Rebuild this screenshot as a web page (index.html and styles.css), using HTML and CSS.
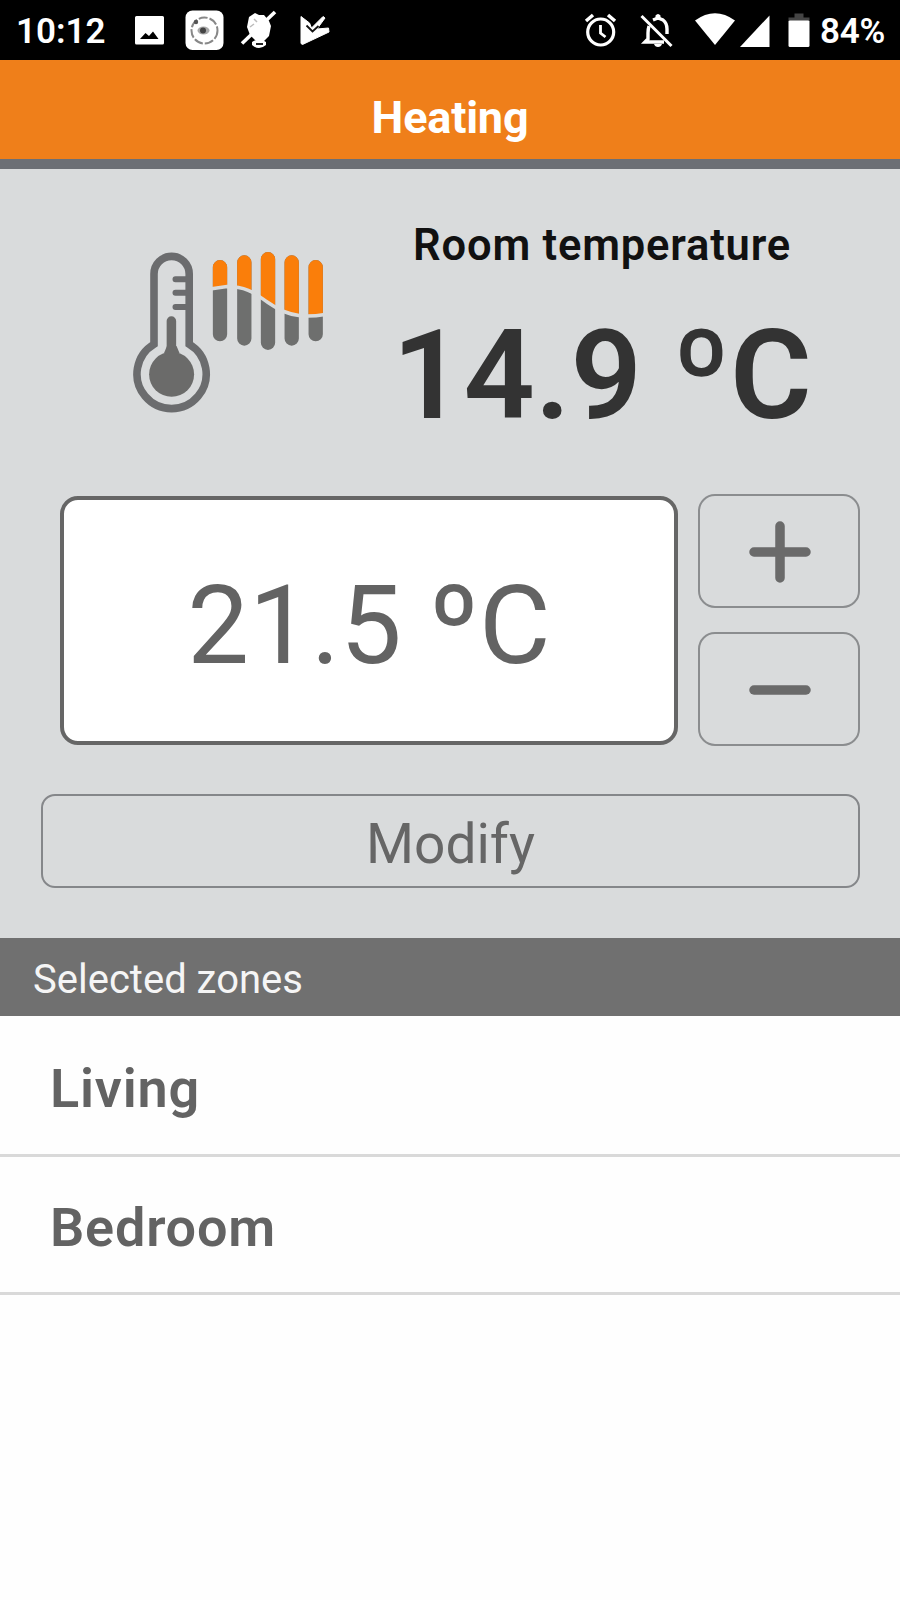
FILE: index.html
```html
<!DOCTYPE html>
<html lang="en">
<head>
<meta charset="utf-8">
<title>Heating</title>
<link rel="stylesheet" href="styles.css">
</head>
<body>
<div class="status-bar">
  <span class="clock">10:12</span>
  <svg class="notifications" width="200" height="60" viewBox="130 0 200 60" fill="#fff">
    <path fill-rule="evenodd" d="M136.500 16h26q1.500 0 1.500 1.500v25.500q0 1.500-1.500 1.500h-26q-1.500 0-1.500-1.500v-25.500q0-1.500 1.500-1.500zM140 39h18.500l-5.500-7.500-4 4.500-3.500-3z"/>
    <rect x="185.500" y="10.500" width="38" height="39.500" rx="7"/>
    <circle cx="204.500" cy="30.500" r="13" fill="none" stroke="#888" stroke-width="2" stroke-dasharray="9 2"/>
    <ellipse cx="203.500" cy="30.500" rx="6" ry="4" fill="#aaa"/>
    <circle cx="203" cy="30.500" r="3" fill="#444"/>
    <circle cx="196" cy="22" r="2.200" fill="#555"/>
    <path d="M249 17l6-4 4 2 5 0 5 6 2 5-2 10-5 5h-8l-6-6-3-8z"/>
    <path d="M242 43.500L275 12" stroke="#fff" stroke-width="3.600"/>
    <path d="M252 42q8-5 14 0v3q-7 6-14 0z"/>
    <path d="M256 44h7" stroke="#222" stroke-width="2"/>
    <path d="M254 19l3 3M250 27l4-3" stroke="#bbb" stroke-width="1.500"/>
    <path d="M301 16.500l8.500 6.500 2 5L323 16.500l2 1.500-8 11 11.500-1 .5 4L302.500 44.500l-1.500-1z" stroke="#fff" stroke-linejoin="round"/>
    <path d="M306.500 25.500l6 6 6-5.500" fill="none" stroke="#111" stroke-width="1.800"/>
  </svg>
  <svg class="indicators" width="230" height="60" viewBox="584 0 230 60" fill="#fff">
    <g fill="none" stroke="#fff">
      <circle cx="600.700" cy="32" r="13" stroke-width="3.200"/>
      <path d="M600.500 25v8l5 4" stroke-width="2.800"/>
      <path d="M586 21l7-6M608 15l7 6" stroke-width="3.500"/>
      <path d="M641.500 16l30 30" stroke-width="3"/>
      <path d="M649 26q-1 3-1 7v6l-3 3h19M653 20l5-2 5 2q4 3 4 9v5" stroke-width="3.400"/>
    </g>
    <path d="M655.500 18v-2.500q2.500-3 5 0V18zM654 44h8q-1 3-4 3t-4-3z"/>
    <path d="M695 20.500Q715 6 735 20.500L715 45z"/>
    <path d="M769.500 15.500V47H740z"/>
    <rect x="788.500" y="20" width="21" height="27" rx="1.500"/>
    <path d="M788.500 20.500v-3h6V13.500h9v4h6v3z" fill="#444"/>
  </svg>
  <span class="battery-level">84%</span>
</div>
<header class="title-bar"><h1 class="title">Heating</h1></header>
<main class="panel">
  <section class="room">
    <svg class="room-icon" width="220" height="190" viewBox="0 0 220 190">
      <defs>
        <clipPath id="warm"><path d="M90 0H210V74L203 74Q190 77 179 75.500C166 73 160 70 148 62S128 46 107 46L90 48.500Z"/></clipPath>
        <g id="bars" stroke-width="14.300" stroke-linecap="round">
          <path d="M100 27.200V94.200M124.300 22.500V98.500M148 19.200V102.800M171.700 22.500V98.500M195.700 27.200V94.200"/>
        </g>
      </defs>
      <path d="M34 104.200V34a17.600 17.600 0 0 1 35.200 0V104.200A34.600 34.600 0 1 1 34 104.200Z" fill="none" stroke="#6b6c6e" stroke-width="7.600"/>
      <path d="M51.400 81V120" stroke="#6b6b6a" stroke-width="9.500" stroke-linecap="round"/>
      <circle cx="51.600" cy="134.300" r="22.500" fill="#6b6b6a"/>
      <path d="M44 113l3-7h9.500l3 7z" fill="#6b6b6a"/>
      <path d="M55.500 39.200H68M55.500 52.700H68M55.500 67H68" stroke="#6b6c6e" stroke-width="6" stroke-linecap="round"/>
      <use href="#bars" stroke="#6e6f6e"/>
      <g clip-path="url(#warm)"><use href="#bars" stroke="#fa7e0a"/></g>
      <path d="M90 49L107 46.500C128 46.500 136 54.500 148 62.500S166 73.500 179 75.500Q190 77 205 74.500" fill="none" stroke="#d9dbdc" stroke-width="3.600"/>
    </svg>
    <div class="room-reading">
      <h2 class="room-label">Room temperature</h2>
      <p class="room-value">14.9 ºC</p>
    </div>
  </section>
  <section class="setpoint">
    <output class="setpoint-value">21.5 ºC</output>
    <div class="steppers">
      <button class="step" aria-label="Increase"><svg width="64" height="64" viewBox="0 0 64 64"><path d="M7 32H59M33 6V58"/></svg></button>
      <button class="step" aria-label="Decrease"><svg width="64" height="64" viewBox="0 0 64 64"><path d="M7 32H59"/></svg></button>
    </div>
  </section>
  <button class="modify">Modify</button>
</main>
<h2 class="zones-title">Selected zones</h2>
<ul class="zones">
  <li class="zone">Living</li>
  <li class="zone">Bedroom</li>
</ul>
</body>
</html>
```
FILE: styles.css
```css
* { box-sizing: border-box; margin: 0; padding: 0; }
body {
  width: 900px;
  min-height: 1600px;
  background: #fefefe;
  font-family: Roboto, "Liberation Sans", sans-serif;
}
button { font: inherit; background: none; }
.status-bar {
  display: flex;
  align-items: center;
  height: 60px;
  padding: 0 14px 0 16px;
  background: #000;
  color: #fff;
  font-size: 35px;
  font-weight: 600;
  white-space: nowrap;
}
.clock, .battery-level { line-height: 40px; padding-top: 4px; }
.clock { width: 114px; }
.indicators { margin-left: auto; margin-right: 6px; }
.battery-level { width: 66px; letter-spacing: -.3px; }
.title-bar {
  height: 109px;
  padding-top: 16px;
  background: #ef7f1a;
  border-bottom: 10px solid #6c6f75;
}
.title {
  font-size: 45px;
  font-weight: 700;
  line-height: 83px;
  letter-spacing: -.2px;
  text-align: center;
  color: #fff;
}
.panel {
  height: 769px;
  padding-top: 52px;
  background: #d9dbdc;
}
.room {
  display: flex;
  height: 273px;
  padding-left: 120px;
}
.room-icon { margin-top: 19px; }
.room-reading { width: 524px; text-align: center; white-space: nowrap; }
.room-label {
  font-size: 43.5px;
  font-weight: 600;
  line-height: 50px;
  letter-spacing: .8px;
  color: #111;
}
.room-value {
  margin-top: 40px;
  font-size: 125px;
  font-weight: 600;
  line-height: 130px;
  color: #333;
}
.setpoint {
  display: flex;
  gap: 20px;
  height: 252px;
  padding-left: 60px;
}
.setpoint-value {
  width: 618px;
  height: 249px;
  margin-top: 2px;
  border: 4px solid #666;
  border-radius: 18px;
  background: #fff;
  color: #636363;
  font-size: 110px;
  line-height: 252px;
  text-align: center;
}
.steppers { display: flex; flex-direction: column; gap: 24px; }
.step {
  display: flex;
  align-items: center;
  justify-content: center;
  width: 162px;
  height: 114px;
  padding-top: 2px;
  border: 2px solid #8b8d8f;
  border-radius: 17px;
}
.step svg { fill: none; stroke: #6a6a6a; stroke-width: 9.5px; stroke-linecap: round; }
.modify {
  display: block;
  width: 819px;
  height: 94px;
  margin: 48px 0 0 41px;
  padding-top: 7px;
  border: 2px solid #85878a;
  border-radius: 14px;
  color: #666;
  font-size: 55px;
  line-height: 83px;
}
.zones-title {
  height: 78px;
  padding-left: 33px;
  background: #707070;
  color: #f5f5f5;
  font-size: 40px;
  font-weight: 400;
  line-height: 84px;
}
.zones { list-style: none; }
.zone {
  height: 138px;
  padding-left: 50px;
  border-bottom: 3px solid #d9d9d9;
  color: #636363;
  font-size: 54px;
  font-weight: 600;
  line-height: 141px;
  letter-spacing: .8px;
}
.zone:first-child { height: 141px; line-height: 146px; }
```
